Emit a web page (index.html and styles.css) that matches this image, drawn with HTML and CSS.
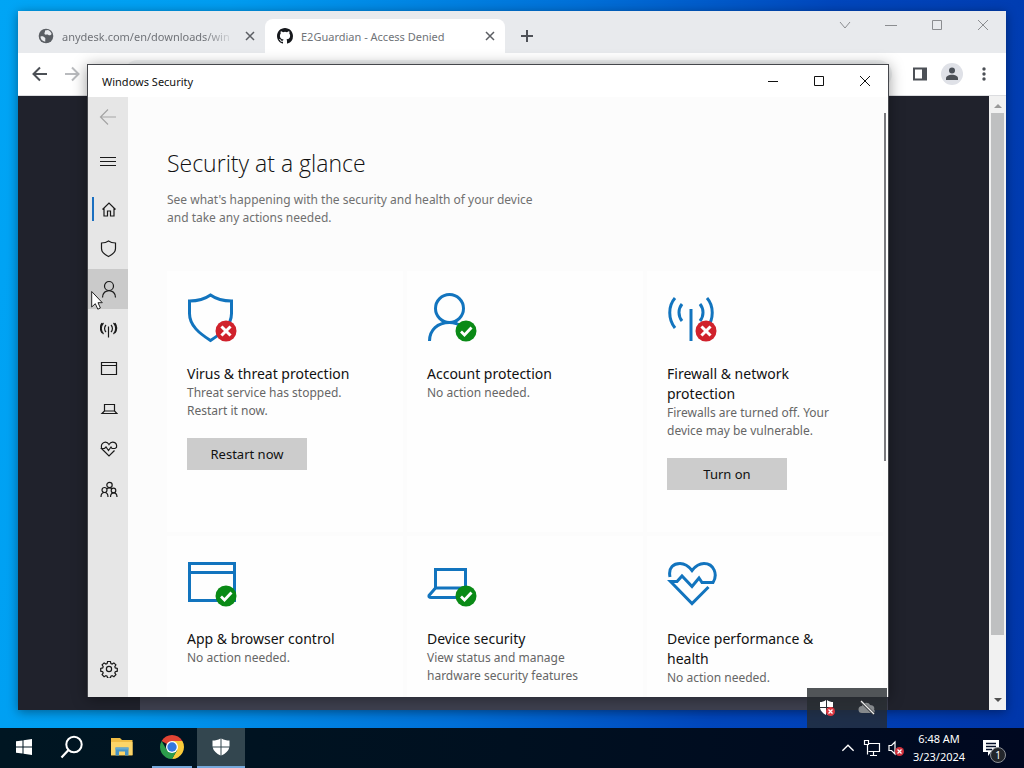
FILE: index.html
```html
<!DOCTYPE html>
<html lang="en">
<head>
  <meta charset="UTF-8">
  <title>Windows Security</title>
  <link rel="stylesheet" href="styles.css">
</head>
<body>

<svg class="defs" aria-hidden="true">
  <symbol id="badge-error" viewBox="0 0 22 22">
    <circle cx="11" cy="11" r="10.5" fill="#d0222c" stroke="none"/>
    <path d="M7.500 7.500l7 7M14.500 7.500l-7 7" stroke="#fff" stroke-width="3" stroke-linecap="square"/>
  </symbol>
  <symbol id="badge-ok" viewBox="0 0 22 22">
    <circle cx="11" cy="11" r="10.5" fill="#0a8a16" stroke="none"/>
    <path d="M6 11.500l3.500 3.500 7-7.500" fill="none" stroke="#fff" stroke-width="2.800"/>
  </symbol>
</svg>

<!-- browser window -->
<div class="browser">
  <div class="tab-strip">
    <div class="tab">
      <svg class="tab-icon" viewBox="0 0 16 16"><circle cx="8" cy="8" r="7.300" fill="#5a5e63"/><path d="M2.500 8.500c2-.8 3.500 0 4.500 1.200 1 1-.2 2 .4 3.800-3 0-4.900-2.500-4.900-5zM7 2.500l3-.6c2 .8 3.200 2.300 3.600 4.100-.8 1.500-2.300 1.600-3.200.9-1.200-.9-2.600.4-3.700-.6-.9-1.200.7-2 .3-3.800z" fill="#e8eaed"/></svg>
      <span class="tab-title fade">anydesk.com/en/downloads/win</span>
      <button class="tab-close" aria-label="Close tab"><svg viewBox="0 0 10 10"><path d="M1 1l8 8M9 1l-8 8"/></svg></button>
    </div>
    <div class="tab active">
      <svg class="tab-icon" viewBox="0 0 16 16"><path fill="#16181c" d="M8 0C3.580 0 0 3.580 0 8c0 3.540 2.290 6.530 5.470 7.590.4.070.55-.17.55-.38 0-.19-.01-.82-.01-1.490-2.010.37-2.530-.49-2.690-.94-.09-.23-.48-.94-.82-1.130-.28-.15-.68-.52-.01-.53.630-.01 1.080.58 1.230.82.720 1.210 1.870.87 2.330.66.070-.52.280-.87.510-1.070-1.780-.2-3.640-.89-3.640-3.950 0-.87.310-1.590.82-2.150-.08-.2-.36-1.020.08-2.120 0 0 .67-.21 2.200.82a7.600 7.600 0 0 1 4 0c1.530-1.040 2.200-.82 2.200-.82.440 1.100.16 1.920.08 2.120.510.560.82 1.270.82 2.150 0 3.070-1.870 3.750-3.650 3.950.290.250.540.730.540 1.480 0 1.070-.01 1.930-.01 2.200 0 .210.150.460.550.380A8 8 0 0 0 16 8c0-4.420-3.580-8-8-8z"/></svg>
      <span class="tab-title">E2Guardian - Access Denied</span>
      <button class="tab-close" aria-label="Close tab"><svg viewBox="0 0 10 10"><path d="M1 1l8 8M9 1l-8 8"/></svg></button>
    </div>
    <button class="new-tab" aria-label="New tab"><svg viewBox="0 0 12 12"><path d="M6 0v12M0 6h12"/></svg></button>
    <div class="window-buttons">
      <button aria-label="Search tabs"><svg viewBox="0 0 12 12"><path d="M1 3l5 6 5-6"/></svg></button>
      <button aria-label="Minimize"><svg viewBox="0 0 12 12"><path d="M0 6.500h12"/></svg></button>
      <button aria-label="Maximize"><svg viewBox="0 0 12 12"><path d="M1.500 1.500h9v9h-9z"/></svg></button>
      <button aria-label="Close"><svg viewBox="0 0 12 12"><path d="M1 1l10 10M11 1L1 11"/></svg></button>
    </div>
  </div>
  <div class="toolbar">
    <button aria-label="Back"><svg viewBox="0 0 16 16"><path d="M15 8H2M8 1.500L1.500 8 8 14.500"/></svg></button>
    <button class="disabled" aria-label="Forward"><svg viewBox="0 0 16 16"><path d="M1 8h13M8 1.500L14.500 8 8 14.500"/></svg></button>
    <div class="address"></div>
    <button aria-label="Side panel"><svg viewBox="0 0 16 16"><path d="M2 2.500h12v11H2z"/><path class="solid" d="M10 2h5v12h-5z"/></svg></button>
    <button class="profile" aria-label="Profile"><svg viewBox="0 0 22 22"><circle cx="11" cy="11" r="11" fill="#dfe1e7"/><circle cx="11" cy="7.500" r="3" fill="#4a4f57"/><path class="solid" d="M5 17v-1.500c0-5 12-5 12 0V17z"/></svg></button>
    <button aria-label="Menu"><svg viewBox="0 0 16 16"><g class="solid"><circle cx="8" cy="3" r="1.700"/><circle cx="8" cy="8" r="1.700"/><circle cx="8" cy="13" r="1.700"/></g></svg></button>
  </div>
  <div class="page">
    <div class="page-view"><div class="page-footer"></div></div>
    <div class="page-scroll">
      <svg viewBox="0 0 8 5"><path d="M0 5l4-4 4 4z" fill="#9a9a9a"/></svg>
      <div class="page-thumb"></div>
      <svg viewBox="0 0 8 5"><path d="M0 0l4 4 4-4z" fill="#505050"/></svg>
    </div>
  </div>
</div>

<!-- security window -->
<div class="security">
  <div class="title-bar">
    <span>Windows Security</span>
    <div class="window-buttons">
      <button aria-label="Minimize"><svg viewBox="0 0 12 12"><path d="M1 6.500h10"/></svg></button>
      <button aria-label="Maximize"><svg viewBox="0 0 12 12"><path d="M1.500 1.500h9v9h-9z"/></svg></button>
      <button aria-label="Close"><svg viewBox="0 0 12 12"><path d="M1 1l10 10M11 1L1 11"/></svg></button>
    </div>
  </div>
  <div class="security-body">
    <nav class="side-nav">
      <button class="back" aria-label="Back"><svg viewBox="0 0 18 18"><path d="M17 9H1.500M9 1.500L1.500 9 9 16.500"/></svg></button>
      <button class="menu" aria-label="Menu"><svg viewBox="0 0 18 18"><path d="M1 5.500h16M1 9.500h16M1 13.500h16"/></svg></button>
      <a class="current" href="#" aria-label="Home"><svg viewBox="0 0 18 18"><path d="M2.500 9.500L9 3l6.500 6.500M4 8.500v7.500h3.500v-5h3v5H14V8.500"/></svg></a>
      <a href="#" aria-label="Virus &amp; threat protection"><svg viewBox="0 0 18 18"><path d="M8.500 1c2 1.500 4.500 2 7 2v5.500c0 3.500-3 6-7 8-4-2-7-4.500-7-8V3c2.500 0 5-.5 7-2z"/></svg></a>
      <a class="hover" href="#" aria-label="Account protection"><svg viewBox="0 0 18 18"><circle cx="9" cy="6" r="4.500"/><path d="M2.500 17.500c0-9.300 13-9.300 13 0"/></svg></a>
      <a href="#" aria-label="Firewall"><svg viewBox="0 0 18 18"><path d="M8.500 6.500v11M6 5a5 5 0 0 0 0 7M11 5a5 5 0 0 1 0 7M3.500 3a8 8 0 0 0 0 11M13.500 3a8 8 0 0 1 0 11M2 3a9 9 0 0 0 0 10M15 3a9 9 0 0 1 0 10"/></svg></a>
      <a href="#" aria-label="App &amp; browser control"><svg viewBox="0 0 18 18"><path d="M1.500 2.500h15v12h-15zM1.500 5.500h15"/></svg></a>
      <a href="#" aria-label="Device security"><svg viewBox="0 0 18 18"><path d="M4.500 4.500h10v6.500h-10zM4.500 11l-2.500 2.500h15L14.500 11"/></svg></a>
      <a href="#" aria-label="Device performance"><svg viewBox="0 0 18 18"><path d="M1.500 8C.5 2 6.500.5 9 4.500 11.500.5 17.500 2 16.500 7.500L15 8.500h-3L11 7l-2.500 3.500L6 7 4.500 8.500H1.500L9 16l5.500-5.500"/></svg></a>
      <a href="#" aria-label="Family options"><svg viewBox="0 0 18 18"><circle cx="9.500" cy="5" r="2.700"/><circle cx="4.500" cy="10" r="2.500"/><circle cx="13.500" cy="10.500" r="2.300"/><path d="M1 17c0-6 7-6 7 0M10.500 17c0-5.500 6.500-5.500 6.500 0M6.800 8.800c1.200-1.300 4-1.300 5.200 0"/></svg></a>
      <a class="settings" href="#" aria-label="Settings"><svg viewBox="0 0 18 18"><circle cx="9" cy="9" r="2.600"/><path d="M7.600 1.500h2.800l.5 2 1.200.5 1.800-1.100 2 2-1.100 1.800.5 1.200 2 .5v2.800l-2 .5-.5 1.200 1.100 1.800-2 2-1.800-1.100-1.200.5-.5 2H7.600l-.5-2-1.200-.5-1.800 1.100-2-2 1.100-1.800-.5-1.200-2-.5V8.400l2-.5.5-1.200-1.100-1.800 2-2L5.900 4l1.200-.5z"/></svg></a>
    </nav>

    <main class="content">
      <h1>Security at a glance</h1>
      <p class="intro">See what's happening with the security and health of your device and take any actions needed.</p>

      <div class="cards">
        <section class="card">
          <svg class="card-icon" viewBox="0 0 50 50"><path d="M23.500 2c7 5 14.500 6 21 6v12.500c0 12-10 20-21 27-11-7-21-15-21-27V8c6.500 0 14-1 21-6z"/><use href="#badge-error" x="28" y="27" width="22" height="22"/></svg>
          <h2>Virus &amp; threat protection</h2>
          <p>Threat service has stopped. Restart it now.</p>
          <button>Restart now</button>
        </section>
        <section class="card">
          <svg class="card-icon" viewBox="0 0 50 50"><circle cx="22.500" cy="15.500" r="14"/><path d="M2.500 48c0-11 8-18.500 20-18.500 5 0 9 1.500 12 4"/><use href="#badge-ok" x="28" y="27" width="22" height="22"/></svg>
          <h2>Account protection</h2>
          <p>No action needed.</p>
        </section>
        <section class="card">
          <svg class="card-icon" viewBox="0 0 50 50"><path d="M24 16v32M8 5c-7 8-7 21 0 30M40 5c7 8 7 21 0 30M15 11c-4 5-4 12 0 17M33 11c4 5 4 12 0 17"/><use href="#badge-error" x="28" y="27" width="22" height="22"/></svg>
          <h2>Firewall &amp; network protection</h2>
          <p>Firewalls are turned off. Your device may be vulnerable.</p>
          <button>Turn on</button>
        </section>
        <section class="card">
          <svg class="card-icon" viewBox="0 0 50 50"><path d="M2.500 5.500h45v37h-45zM2.500 14.500h45"/><use href="#badge-ok" x="28" y="27" width="22" height="22"/></svg>
          <h2>App &amp; browser control</h2>
          <p>No action needed.</p>
        </section>
        <section class="card">
          <svg class="card-icon" viewBox="0 0 50 50"><path d="M8.500 11.500h30V30h-30zM8.500 30L2 37.500q-.5 2 2 2h30M38.500 30l4 5"/><use href="#badge-ok" x="28" y="27" width="22" height="22"/></svg>
          <h2>Device security</h2>
          <p>View status and manage hardware security features</p>
        </section>
        <section class="card">
          <svg class="card-icon" viewBox="0 0 50 50"><path d="M3 19C1 9 7 5.500 13 5.500c5 0 8.500 2.500 12 7 3.500-4.500 7-7 12-7 10 0 14 11 9 19H35l-3-4.500-7 8.500L15 18l-5 5.500H3.500L25 45.500 41.500 29"/></svg>
          <h2>Device performance &amp; health</h2>
          <p>No action needed.</p>
        </section>
      </div>
      <div class="scroll-thumb"></div>
    </main>
  </div>
</div>

<!-- hidden icons flyout -->
<div class="flyout">
  <svg viewBox="0 0 18 18"><path d="M8 1C6 2.500 4 3 2 3v5h6zM9 1c2 1.500 4 2 6 2v5H9zM2 9h6v7C5 14.500 2.500 12 2 9zM9 9h6c-.5 3-3 5.500-6 7z" fill="#fff"/><circle cx="12.500" cy="12.500" r="4.500" fill="#dc3640"/><path d="M10.500 10.500l4 4M14.500 10.500l-4 4" stroke="#fff" stroke-width="1.300"/></svg>
  <svg viewBox="0 0 18 18"><path d="M4 14a3.500 3.500 0 0 1 0-7c1-4 7-4 8-1 4 0 5 3 4 4.500 1.500 1.500.5 3.500-1 3.500z" fill="#85898c"/><path d="M3 2.500L16 15" stroke="#3a3e42" stroke-width="3"/><path d="M3 2l13 13" stroke="#eee" stroke-width="1.300"/></svg>
</div>

<!-- cursor -->
<svg class="cursor" viewBox="0 0 12 20"><path d="M.7 1.500v15.500l3.600-3.300 2.500 5.500 2.600-1.200L7 12.700h4.300z" fill="#fff" stroke="#222"/></svg>

<div class="taskbar">
  <button class="task" aria-label="Start"><svg viewBox="0 0 16 16"><path d="M0 2.300L6.500 1.400v6.100H0zM7.500 1.200L16 0v7.500H7.500zM0 8.500h6.500v6.100L0 13.700zM7.500 8.500H16V16l-8.500-1.200z" fill="#fff"/></svg></button>
  <button class="task search" aria-label="Search"><svg viewBox="0 0 24 24"><circle cx="14" cy="9.500" r="7.700" fill="none" stroke="#fff" stroke-width="2"/><path d="M8.500 15L1.500 22.500" stroke="#fff" stroke-width="2.200"/></svg></button>
  <button class="task explorer" aria-label="File Explorer"><svg viewBox="0 0 24 24"><path d="M1 3h9l2 2h10.500v15.500H1z" fill="#f0bd45"/><path d="M1 7h21.500v13H1z" fill="#fcd568"/><path d="M5.500 12.500h13v8h-3.500v-4H9v4H5.500z" fill="#4593c6"/><path d="M5.500 12.500h13v2h-13z" fill="#66aad0"/></svg></button>
  <button class="task chrome" aria-label="Chrome"><svg viewBox="0 0 24 24"><path d="M12 12L1.610 6A12 12 0 0 1 22.390 6z" fill="#e04434"/><path d="M12 6h10.390A12 12 0 0 1 12 24l5.200-9z" fill="#fbcb3a"/><path d="M1.610 6A12 12 0 0 0 12 24l5.200-9H6.800z" fill="#2c9c4b"/><circle cx="12" cy="12" r="6" fill="#fff"/><circle cx="12" cy="12" r="4.700" fill="#3377e0"/></svg></button>
  <button class="task defender" aria-label="Windows Security"><svg viewBox="0 0 18 18"><path d="M8.500.5C6 2 3.500 2.500.5 2.500V8.500h8zM9.500.5c2.500 1.500 5 2 8 2V8.500h-8zM.7 9.500h7.800v8C4.500 15.500 1.500 13 .7 9.500zM9.500 9.500h7.800c-.8 3.500-3.800 6-7.800 8z" fill="#fff"/></svg></button>

  <div class="tray">
    <button aria-label="Show hidden icons"><svg viewBox="0 0 16 16"><path d="M3 10.500l5-5 5 5"/></svg></button>
    <button aria-label="Network"><svg viewBox="0 0 18 18"><path d="M5 4.500h11.500v8H5.500M4.500 5v10.500M1.500 1.500h4v4h-4zM10.500 13v3M7 16.500h7"/></svg></button>
    <button aria-label="Volume muted"><svg viewBox="0 0 18 18"><path d="M2 6.500h2.500L8 3v12L4.500 11.500H2z"/><circle cx="12.500" cy="12.500" r="4.500" fill="#cf303b" stroke="none"/><path d="M10.500 10.500l4 4M14.500 10.500l-4 4"/></svg></button>
  </div>
  <div class="clock">
    <time>6:48 AM</time>
    <time>3/23/2024</time>
  </div>
  <button class="notifications" aria-label="Notifications">
    <svg viewBox="0 0 18 18"><path d="M1 1h16v12H9l-3 4v-4H1z" fill="#fff"/><path d="M4 4.500h10M4 7.500h10M4 10.500h6" stroke="#06102a" stroke-width="1.300"/></svg>
    <span class="count">1</span>
  </button>
</div>

</body>
</html>
```
FILE: styles.css
```css
* {
  box-sizing: border-box;
}
html, body {
  margin: 0;
  height: 100%;
  overflow: hidden;
}
body {
  font-family: 'Noto Sans', 'Open Sans', sans-serif;
  font-size: 12px;
  color: #111;
  background: linear-gradient(100deg, #00a5f5 0%, #009cf0 20%, #0070d8 50%, #0046bc 72%, #0036aa 100%);
}
h1, h2, p {
  margin: 0;
}
button {
  padding: 0;
  border: none;
  background: none;
  font: inherit;
  color: inherit;
}
svg {
  display: block;
  flex: none;
}
.defs {
  position: absolute;
  width: 0;
  height: 0;
}

/* browser */
.browser {
  position: absolute;
  top: 11px;
  left: 18px;
  right: 18px;
  bottom: 58px;
  display: flex;
  flex-direction: column;
  box-shadow: 0 2px 10px rgba(0,0,0,0.4);
}
.tab-strip {
  display: flex;
  height: 42px;
  padding: 8px 0 0 8px;
  background: #e8eaed;
}
.tab {
  display: flex;
  align-items: center;
  width: 239px;
  padding: 0 8px 0 12px;
  color: #707378;
  font-size: 11px;
}
.tab.active {
  width: 240px;
  background: #fff;
  border-radius: 8px 8px 0 0;
}
.tab-icon {
  width: 16px;
  height: 16px;
  margin-right: 8px;
}
.tab-title {
  flex: 1;
  overflow: hidden;
  white-space: nowrap;
}
.tab-title.fade {
  -webkit-mask-image: linear-gradient(to right, #000 82%, transparent);
  mask-image: linear-gradient(to right, #000 82%, transparent);
}
.tab-close {
  padding: 4px 2px 4px 10px;
}
.tab-close svg {
  width: 10px;
  height: 10px;
  stroke: #5b5e63;
  stroke-width: 1.500;
}
.new-tab {
  width: 44px;
}
.new-tab svg {
  width: 12px;
  height: 12px;
  margin: 0 auto;
  stroke: #4e5157;
  stroke-width: 2;
}
.window-buttons {
  display: flex;
  margin-left: auto;
}
.window-buttons button {
  width: 46px;
}
.window-buttons svg {
  width: 12px;
  height: 12px;
  margin: 0 auto;
  fill: none;
  stroke: #111;
}
.tab-strip .window-buttons {
  height: 12px;
}
.tab-strip .window-buttons svg {
  stroke: #8b8d90;
}
.toolbar {
  display: flex;
  align-items: center;
  height: 43px;
  padding: 0 6px;
  background: #fff;
  border-bottom: 1px solid #dcdde0;
}
.toolbar button {
  width: 32px;
}
.toolbar svg {
  width: 16px;
  height: 16px;
  margin: 0 auto;
  fill: none;
  stroke: #4c5056;
  stroke-width: 2;
}
.toolbar .solid {
  fill: #4c5056;
  stroke: none;
}
.toolbar .disabled svg {
  stroke: #b9bbbe;
}
.toolbar .profile svg {
  width: 22px;
  height: 22px;
  stroke: none;
}
.address {
  flex: 1;
  height: 28px;
  margin: 0 12px 0 36px;
  border-radius: 14px;
  background: #f1f3f4;
}
.page {
  flex: 1;
  display: flex;
  background: #20222c;
}
.page-view {
  flex: 1;
  display: flex;
  align-items: flex-end;
}
.page-footer {
  flex: 1;
  height: 13px;
  margin: 0 101px 0 122px;
  background: #3e404f;
}
.page-scroll {
  display: flex;
  flex-direction: column;
  align-items: center;
  width: 17px;
  padding: 7px 0;
  background: #f1f1f1;
}
.page-scroll svg {
  width: 8px;
  height: 5px;
}
.page-thumb {
  width: 13px;
  height: 87%;
  margin: 5px 0 auto;
  background: #bfc0c1;
}

/* security window */
.security {
  position: absolute;
  top: 64px;
  left: 87px;
  right: 135px;
  bottom: 71px;
  display: flex;
  flex-direction: column;
  background: #fcfcfc;
  border: 1px solid #45474c;
  border-bottom: none;
  box-shadow: 0 2px 14px rgba(0,0,0,0.4);
}
.title-bar {
  display: flex;
  align-items: center;
  height: 32px;
  padding-left: 14px;
  background: #fff;
  font-size: 11px;
}
.security-body {
  flex: 1;
  min-height: 0;
  display: flex;
}
.side-nav {
  display: flex;
  flex-direction: column;
  width: 40px;
  padding-bottom: 8px;
  background: #e6e6e6;
}
.side-nav a, .side-nav button {
  display: flex;
  align-items: center;
  justify-content: center;
  height: 40px;
}
.side-nav a {
  padding-left: 2px;
}
.side-nav svg {
  width: 18px;
  height: 18px;
  fill: none;
  stroke: #1a1a1a;
  stroke-width: 1.200;
}
.side-nav .back svg {
  stroke: #a5a5a5;
}
.side-nav .menu {
  margin: 4px 0 8px;
}
.side-nav .current {
  background: linear-gradient(#1a6fc0, #1a6fc0) 4px center / 2px 24px no-repeat;
}
.side-nav .hover {
  background: #cacaca;
}
.side-nav .settings {
  margin-top: auto;
}
.content {
  position: relative;
  flex: 1;
  overflow: hidden;
  padding: 50px 5px 0 39px;
}
h1 {
  font-family: 'Open Sans', sans-serif;
  font-size: 23px;
  font-weight: 300;
  line-height: 32px;
}
.intro {
  max-width: 380px;
  margin: 12px 0 44px;
  color: #707070;
  line-height: 18px;
}
.cards {
  display: grid;
  grid-template-columns: repeat(3, 1fr);
  grid-auto-rows: 261px;
  gap: 4px;
}
.card {
  padding: 22px 44px 0 20px;
  background: #fefefe;
}
.card-icon {
  width: 50px;
  height: 50px;
  fill: none;
  stroke: #1274be;
  stroke-width: 3;
}
.card h2 {
  margin-top: 21px;
  font-size: 14px;
  font-weight: 400;
  line-height: 20px;
}
.card p {
  color: #666;
  line-height: 18px;
}
.card button {
  width: 120px;
  height: 32px;
  margin-top: 18px;
  background: #ccc;
  font-size: 13px;
}
.scroll-thumb {
  position: absolute;
  top: 16px;
  right: 2px;
  width: 2px;
  height: 58%;
  background: #7a7a7e;
}

.flyout {
  position: absolute;
  right: 137px;
  bottom: 40px;
  display: flex;
  align-items: center;
  justify-content: space-around;
  width: 80px;
  height: 40px;
  background: rgba(38,42,46,0.8);
}
.flyout svg {
  width: 18px;
  height: 18px;
}
.cursor {
  position: absolute;
  top: 290px;
  left: 91px;
  width: 12px;
  height: 20px;
}

/* taskbar */
.taskbar {
  position: absolute;
  left: 0;
  right: 0;
  bottom: 0;
  display: flex;
  height: 40px;
  background: linear-gradient(to right, #001622, #001020 50%, #000820);
  color: #fff;
}
.task {
  width: 48px;
  border-bottom: 2px solid transparent;
}
.task svg {
  width: 24px;
  height: 24px;
  margin: 0 auto;
}
.task:first-child svg {
  width: 16px;
  height: 16px;
}
.explorer {
  margin: 0 5px 0 2px;
}
.chrome {
  width: 40px;
  margin: 0 5px 0 1px;
  border-color: #76a9dc;
}
.defender {
  background: #33464f;
  border-color: #76a9dc;
}
.defender svg {
  width: 18px;
  height: 18px;
}
.tray {
  display: flex;
  margin-left: auto;
}
.tray button {
  width: 24px;
}
.tray svg {
  width: 18px;
  height: 18px;
  margin: 0 auto;
  fill: none;
  stroke: #fff;
  stroke-width: 1.200;
}
.clock {
  display: flex;
  flex-direction: column;
  justify-content: center;
  width: 62px;
  text-align: center;
  font-size: 11px;
  line-height: 18px;
}
.notifications {
  position: relative;
  width: 54px;
}
.notifications svg {
  width: 18px;
  height: 18px;
  margin-left: 12px;
}
.count {
  position: absolute;
  left: 20px;
  top: 19px;
  width: 16px;
  height: 16px;
  border: 1px solid #8c9096;
  border-radius: 50%;
  background: #23262b;
  font-size: 10px;
  line-height: 14px;
}
```
